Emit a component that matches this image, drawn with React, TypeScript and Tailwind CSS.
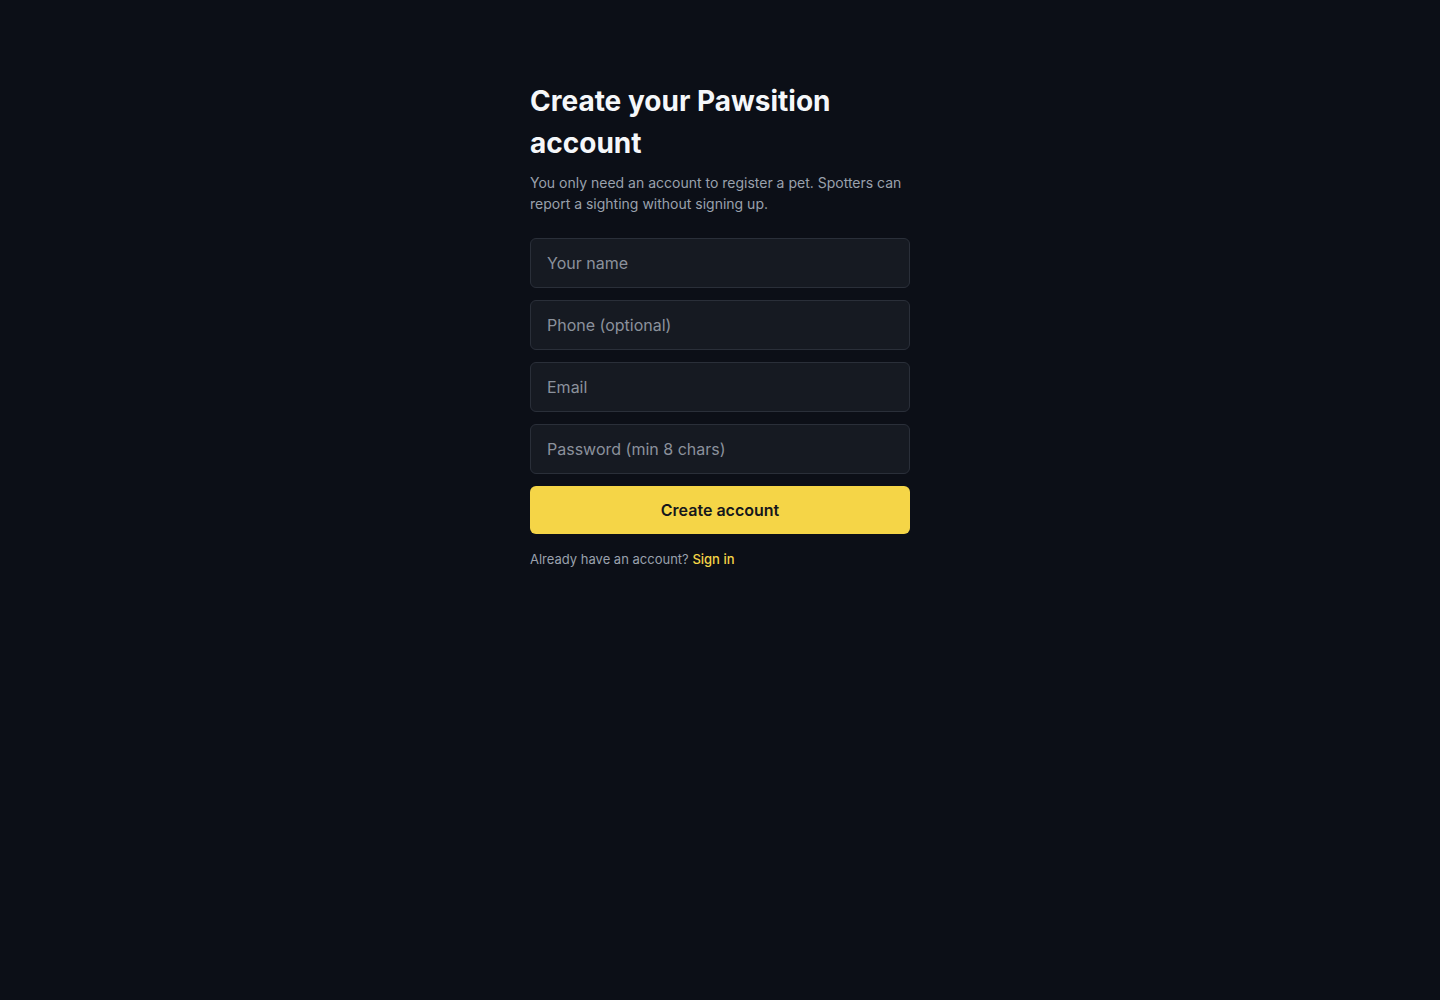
import React from 'react';

const fields = ['Your name', 'Phone (optional)', 'Email', 'Password (min 8 chars)'];

export default function App() {
  return (
    <div
      className="min-h-screen w-full bg-[#0c0f17] text-white"
      style={{ fontFamily: 'Inter, "Noto Sans", sans-serif' }}
    >
      <div className="mx-auto w-[380px] pt-[80px]">
        <h1 className="text-[28px] font-bold leading-[42px] text-[#f5f7fa]">
          Create your Pawsition account
        </h1>
        <p className="mt-2 text-[14px] leading-[21px] text-[#9aa1ad]">
          You only need an account to register a pet. Spotters can report a sighting without signing up.
        </p>

        <form className="mt-6 flex flex-col gap-3" onSubmit={(e) => e.preventDefault()}>
          {fields.map((f) => (
            <input
              key={f}
              type={f.startsWith('Password') ? 'password' : 'text'}
              placeholder={f}
              className="h-[50px] w-full rounded-md border border-[#2a2f39] bg-[#161a22] px-4 text-[16px] text-white outline-none placeholder:text-[#8b919c]"
            />
          ))}
          <button
            type="submit"
            className="h-[48px] w-full rounded-md bg-[#f5d547] text-[16px] font-semibold text-[#15171c]"
          >
            Create account
          </button>
        </form>

        <p className="mt-[15px] text-[13px] leading-[20px] text-[#9aa1ad]">
          Already have an account? <a className="font-medium text-[#f5d547]" href="#">Sign in</a>
        </p>
      </div>
    </div>
  );
}
